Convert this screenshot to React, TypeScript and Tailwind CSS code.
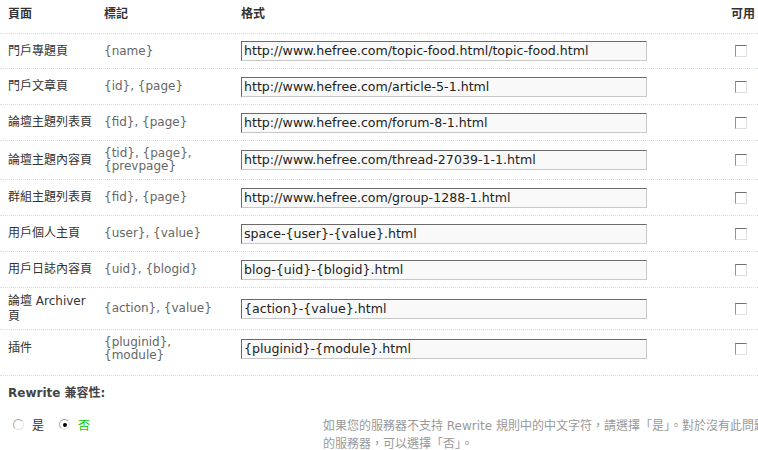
import React from "react";

type Row = { label: React.ReactNode; tokens: React.ReactNode; value: string; h: string };

const rows: Row[] = [
  { label: "門戶專題頁", tokens: "{name}", value: "http://www.hefree.com/topic-food.html/topic-food.html", h: "h-[35px]" },
  { label: "門戶文章頁", tokens: "{id}, {page}", value: "http://www.hefree.com/article-5-1.html", h: "h-[36px]" },
  { label: "論壇主題列表頁", tokens: "{fid}, {page}", value: "http://www.hefree.com/forum-8-1.html", h: "h-[36px]" },
  { label: "論壇主題內容頁", tokens: "{tid}, {page}, {prevpage}", value: "http://www.hefree.com/thread-27039-1-1.html", h: "h-[39px]" },
  { label: "群組主題列表頁", tokens: "{fid}, {page}", value: "http://www.hefree.com/group-1288-1.html", h: "h-[36px]" },
  { label: "用戶個人主頁", tokens: "{user}, {value}", value: "space-{user}-{value}.html", h: "h-[36px]" },
  { label: "用戶日誌內容頁", tokens: "{uid}, {blogid}", value: "blog-{uid}-{blogid}.html", h: "h-[36px]" },
  { label: "論壇 Archiver 頁", tokens: "{action}, {value}", value: "{action}-{value}.html", h: "h-[42px]" },
  { label: "插件", tokens: "{pluginid}, {module}", value: "{pluginid}-{module}.html", h: "h-[46px] pb-[8px]" },
];

function Checkbox() {
  return (
    <div className="w-[12px] h-[12px] bg-white border border-t-[#6f6f6f] border-l-[#8490c0] border-r-[#e2dce4] border-b-[#e2dce4]" />
  );
}

function Radio({ checked }: { checked?: boolean }) {
  return (
    <div className="w-[11px] h-[11px] rounded-full bg-white border border-t-[#8e9cb5] border-l-[#c9a98a] border-r-[#e3e3e3] border-b-[#e3e3e3] flex items-center justify-center">
      {checked ? <div className="w-[4px] h-[4px] rounded-full bg-black" /> : null}
    </div>
  );
}

export default function App() {
  return (
    <div className="w-[758px] h-[450px] overflow-hidden bg-white text-[12px] text-[#333] font-['DejaVu_Sans','Noto_Sans_CJK_TC',sans-serif]">
      <div className="grid grid-cols-[104px_137px_490px_27px] h-[34px] border-b border-dotted border-[#cfe0ec] font-bold leading-[14px] pt-[7px]">
        <div className="pl-[8px]">頁面</div>
        <div>標記</div>
        <div>格式</div>
        <div>可用</div>
      </div>
      {rows.map((r, i) => (
        <div
          key={i}
          className={`grid grid-cols-[104px_137px_490px_27px] items-center border-b border-dotted border-[#cfe0ec] ${r.h}`}
        >
          <div className="pl-[8px] pr-[8px] leading-[15px] text-[#333]">{r.label}</div>
          <div className="pr-[8px] leading-[13px] text-[#666]">{r.tokens}</div>
          <div>
            <div className="w-[406px] h-[20px] bg-[#f9f9f9] border border-t-[#6a6a6a] border-l-[#6a6a6a] border-r-[#c8c8c8] border-b-[#c8c8c8] px-[2px] text-[12.6px] leading-[18px] text-[#222] whitespace-nowrap overflow-hidden">
              {r.value}
            </div>
          </div>
          <div className="pl-[4px]">
            <Checkbox />
          </div>
        </div>
      ))}
      <div className="pl-[8px] mt-[9px] h-[16px] leading-[16px] font-bold text-[#444]">Rewrite 兼容性:</div>
      <div className="flex mt-[18px]">
        <div className="w-[323px] shrink-0 flex items-start pl-[13px]">
          <Radio />
          <span className="ml-[8px] leading-[18px] -mt-[2px] text-[#333]">是</span>
          <div className="ml-[15px]">
            <Radio checked />
          </div>
          <span className="ml-[8px] leading-[18px] -mt-[2px] text-[#00c800]">否</span>
        </div>
        <div className="shrink-0 text-[#999] leading-[18px] -mt-[2px] whitespace-nowrap">
          如果您的服務器不支持 Rewrite 規則中的中文字符，請選擇「是」。對於沒有此問題
          <br />
          的服務器，可以選擇「否」。
        </div>
      </div>
    </div>
  );
}
